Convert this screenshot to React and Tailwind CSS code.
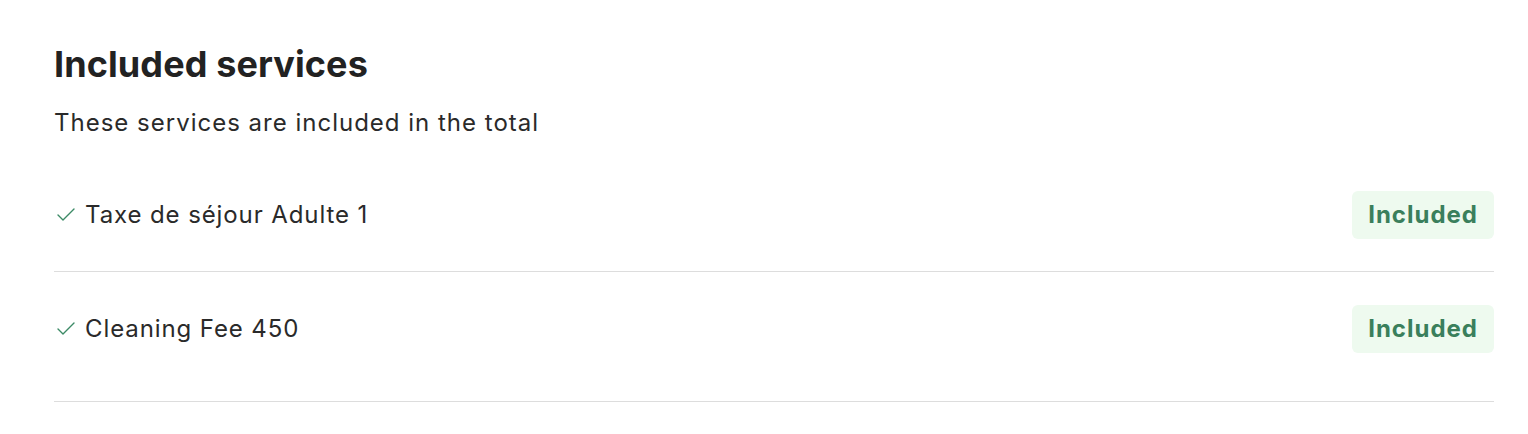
import { Check } from 'lucide-react';

const services = [
  { id: 1, name: 'Taxe de séjour Adulte 1' },
  { id: 2, name: 'Cleaning Fee 450' },
];

export default function App() {
  return (
    <div className="min-h-screen bg-white" style={{ fontFamily: 'Inter, "Noto Sans", sans-serif' }}>
      <div className="pl-[54px] pr-[34px] pt-[42px] pb-[32px]">
        <h2 className="text-[36px] leading-[44px] font-bold tracking-[0.1px] text-[#222222]">Included services</h2>
        <p className="mt-[22px] text-[24px] leading-[30px] tracking-[1px] text-[#2a2a2a]">These services are included in the total</p>

        <div className="mt-[20px]">
          {services.map((s, i) => (
            <div
              key={s.id}
              className={`flex items-center justify-between border-b border-[#dddddd] pt-[33px] ${i === services.length - 1 ? 'pb-[48px]' : 'pb-[32px]'}`}
            >
              <div className="flex items-center gap-[7px]">
                <Check className="w-[24px] h-[24px] text-[#3c8a66]" strokeWidth={1.4} />
                <span className="text-[24px] leading-[30px] tracking-[0.9px] text-[#2a2a2a]">{s.name}</span>
              </div>
              <span className="rounded-[6px] bg-[#eefaef] px-[16px] h-[48px] flex items-center text-[24px] font-bold tracking-[1px] text-[#3a7f5c]">
                Included
              </span>
            </div>
          ))}
        </div>
      </div>
    </div>
  );
}
